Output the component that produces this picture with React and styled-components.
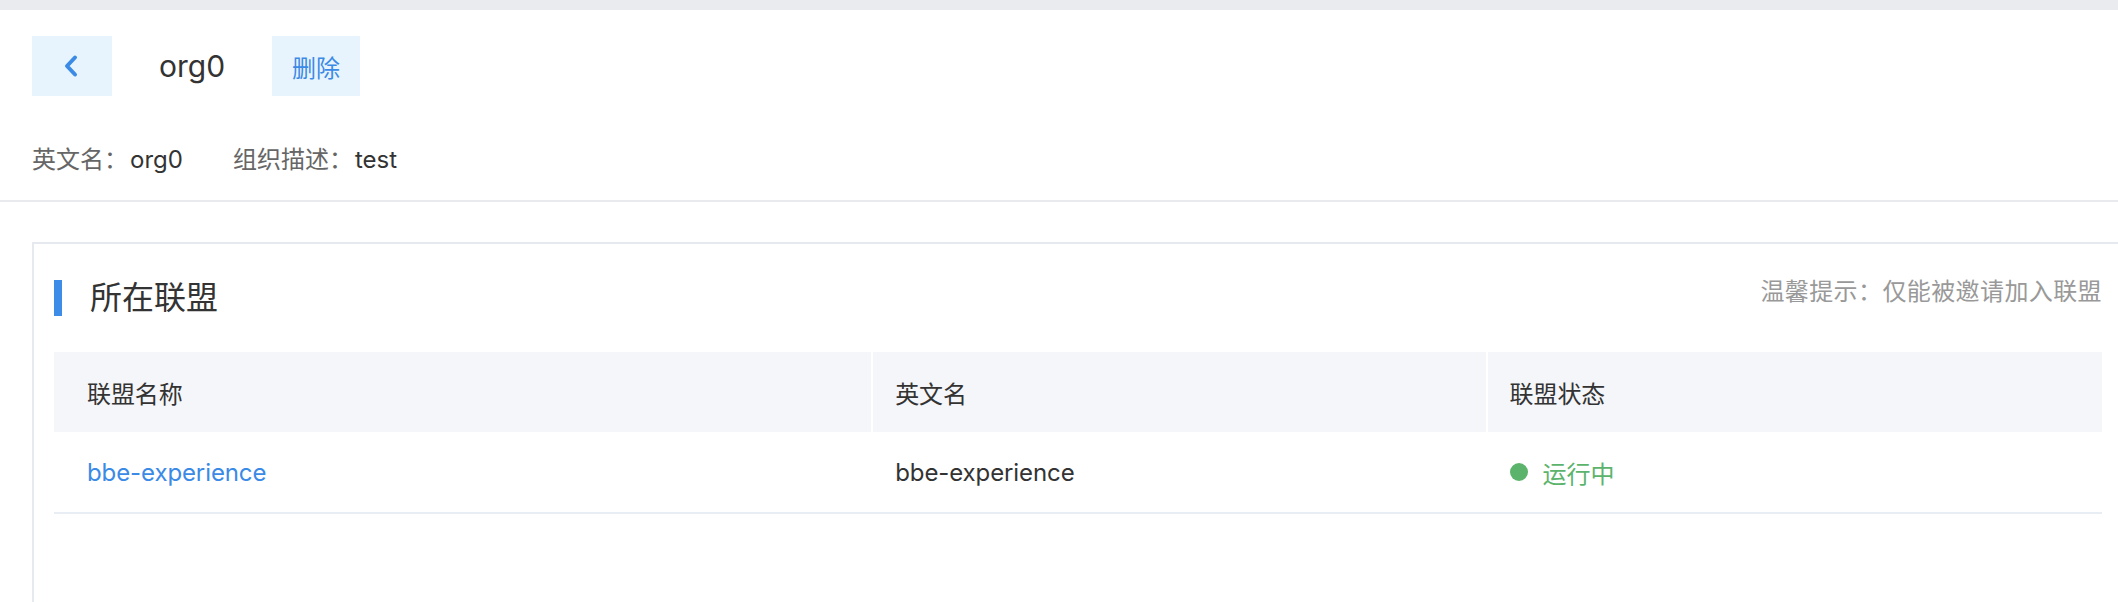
import React from "react";
import styled, { createGlobalStyle } from "styled-components";

const GlobalStyle = createGlobalStyle`
  html, body {
    margin: 0;
    padding: 0;
    background: #ffffff;
    overflow: hidden;
  }
  body {
    font-family: Inter, "Noto Sans CJK SC", "Noto Sans", sans-serif;
    color: #333333;
  }
  * { box-sizing: border-box; }
`;

const Page = styled.div`
  width: 2118px;
  min-height: 602px;
  overflow: hidden;
  background: #ffffff;
`;

const TopBar = styled.div`
  height: 10px;
  background: #e9ebee;
`;

const Header = styled.header`
  padding: 26px 32px 20px;
  border-bottom: 2px solid #e8eaed;
`;

const TitleRow = styled.div`
  display: flex;
  align-items: center;
  gap: 47px;
  height: 60px;
`;

const IconButton = styled.button`
  width: 80px;
  height: 60px;
  border: none;
  padding: 0;
  background: #e8f4fd;
  display: flex;
  align-items: center;
  justify-content: center;
  cursor: pointer;
`;

const OrgName = styled.h1`
  margin: 0;
  font-size: 30px;
  font-weight: 400;
  color: #333333;
  line-height: 60px;
`;

const TextButton = styled.button`
  height: 60px;
  padding: 0 20px;
  border: none;
  background: #e8f4fd;
  color: #3a8ae6;
  font-family: inherit;
  font-size: 24px;
  cursor: pointer;
`;

const InfoRow = styled.div`
  display: flex;
  gap: 50px;
  margin-top: 44px;
  font-size: 24px;
  line-height: 40px;
`;

const InfoItem = styled.span`
  color: #333333;
`;

const InfoLabel = styled.span`
  color: #666666;
  margin-right: 2px;
`;

const Content = styled.main`
  padding: 40px 0 0 32px;
`;

const Card = styled.section`
  margin-right: -6px;
  min-height: 420px;
  border: 2px solid #e6e9ee;
  padding: 36px 20px 0 20px;
`;

const CardHead = styled.div`
  display: flex;
  justify-content: space-between;
  align-items: flex-start;
  height: 36px;
`;

const CardTitle = styled.h2`
  display: flex;
  align-items: center;
  gap: 28px;
  margin: 0;
  font-size: 32px;
  font-weight: 400;
  line-height: 36px;
  color: #333333;

  &::before {
    content: "";
    width: 8px;
    height: 36px;
    background: #3d8de8;
  }
`;

const Hint = styled.span`
  font-size: 24px;
  line-height: 24px;
  letter-spacing: 0.4px;
  color: #999999;
`;

const Table = styled.div`
  margin-top: 36px;
`;

const Row = styled.div`
  display: grid;
  grid-template-columns: 4fr 3fr 3fr;
  height: ${(p) => (p.$head ? "80px" : "82px")};
  background: ${(p) => (p.$head ? "#f5f6f9" : "#ffffff")};
  border-bottom: ${(p) => (p.$head ? "none" : "2px solid #e9edf4")};
`;

const Cell = styled.div`
  display: flex;
  align-items: center;
  gap: 15px;
  padding-left: ${(p) => (p.$first ? "33px" : "22px")};
  font-size: 24px;
  letter-spacing: -0.1px;
  color: ${(p) => p.$color || "#333333"};
  border-right: ${(p) => (p.$head && !p.$last ? "2px solid #ffffff" : "none")};
`;

const Dot = styled.span`
  width: 18px;
  height: 18px;
  border-radius: 50%;
  background: #5cb46c;
`;

const columns = ["联盟名称", "英文名", "联盟状态"];

export default function App() {
  return (
    <Page>
      <GlobalStyle />
      <TopBar />
      <Header>
        <TitleRow>
          <IconButton aria-label="back">
            <svg width="20" height="24" viewBox="0 0 20 24">
              <polyline
                points="13,3.5 5,12 13,20.5"
                fill="none"
                stroke="#3a8ae6"
                strokeWidth="4"
                strokeLinecap="round"
                strokeLinejoin="round"
              />
            </svg>
          </IconButton>
          <OrgName>org0</OrgName>
          <TextButton>删除</TextButton>
        </TitleRow>
        <InfoRow>
          <InfoItem>
            <InfoLabel>英文名：</InfoLabel>org0
          </InfoItem>
          <InfoItem>
            <InfoLabel>组织描述：</InfoLabel>test
          </InfoItem>
        </InfoRow>
      </Header>
      <Content>
        <Card>
          <CardHead>
            <CardTitle>所在联盟</CardTitle>
            <Hint>温馨提示：仅能被邀请加入联盟</Hint>
          </CardHead>
          <Table>
            <Row $head>
              {columns.map((c, i) => (
                <Cell key={c} $head $first={i === 0} $last={i === columns.length - 1}>
                  {c}
                </Cell>
              ))}
            </Row>
            <Row>
              <Cell $first $color="#3a8ae6">bbe-experience</Cell>
              <Cell>bbe-experience</Cell>
              <Cell $color="#5cb46c">
                <Dot />
                运行中
              </Cell>
            </Row>
          </Table>
        </Card>
      </Content>
    </Page>
  );
}
